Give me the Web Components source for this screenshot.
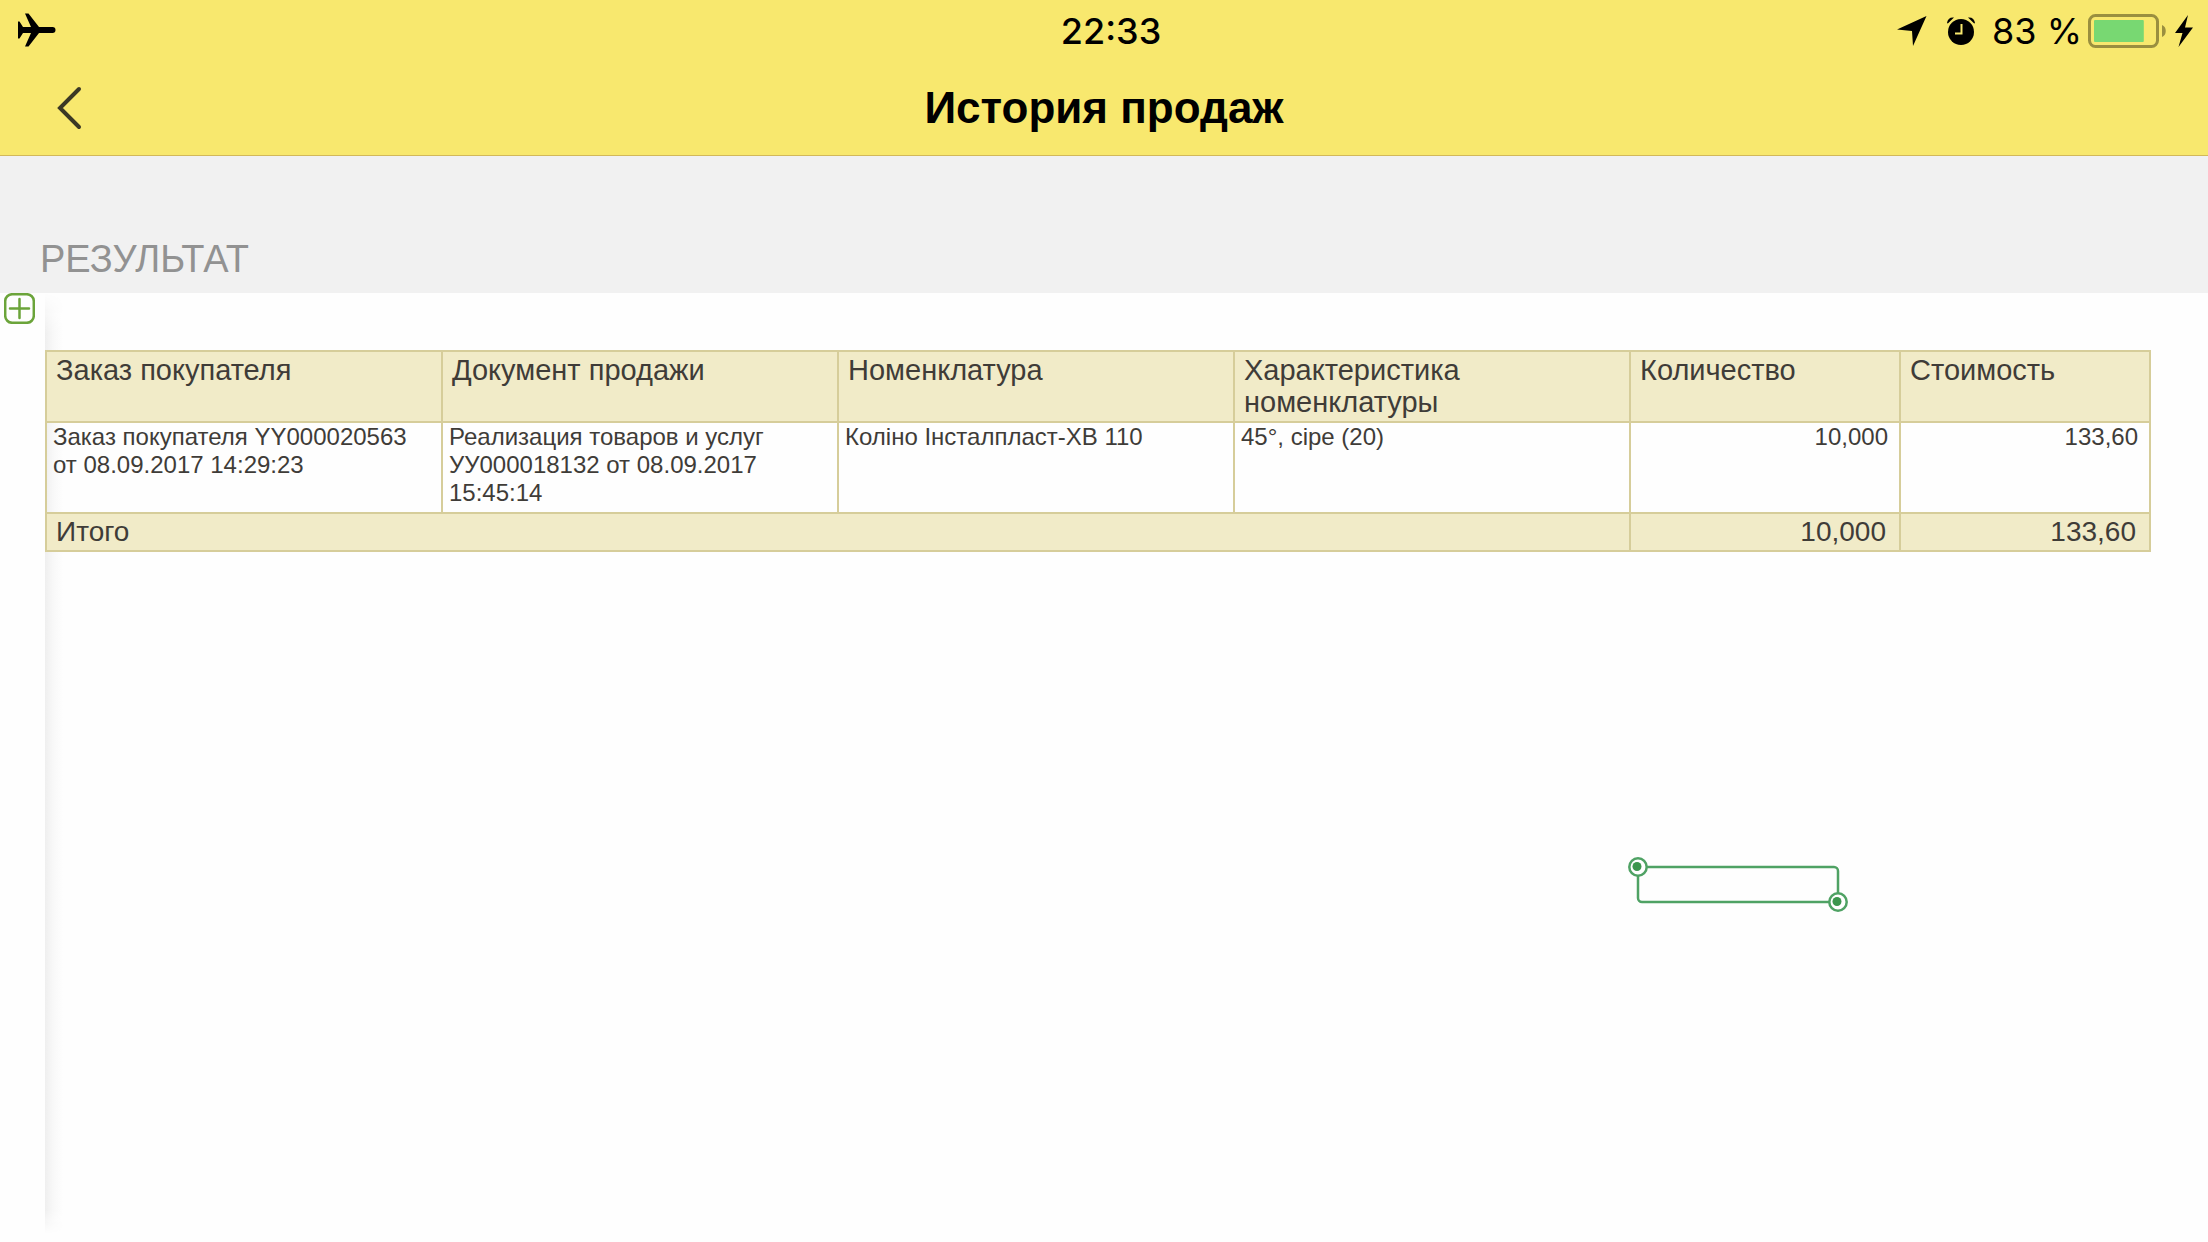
<!DOCTYPE html>
<html lang="ru">
<head>
<meta charset="utf-8">
<meta name="viewport" content="width=device-width, initial-scale=1">
<title>История продаж</title>
<style>
  body {
    margin: 0;
    min-height: 100vh;
    display: flex;
    flex-direction: column;
    background: #fefefe;
    font-family: "Liberation Sans", Arial, sans-serif;
    --bar: #f8e86e;
    --cell: #f1ebc8;
    --line: #d6cd9a;
  }
  report-sheet {
    flex: 1;
  }
</style>
</head>
<body>
  <status-bar time="22:33" battery="83"></status-bar>
  <nav-bar>История продаж</nav-bar>
  <section-title>Результат</section-title>
  <report-sheet>
    <sales-table></sales-table>
    <cell-selection slot="overlay"></cell-selection>
  </report-sheet>

<script>
class StatusBar extends HTMLElement {
  constructor() {
    super();
    this.attachShadow({ mode: 'open' });
  }

  connectedCallback() {
    const battery = Number(this.getAttribute('battery'));
    this.shadowRoot.innerHTML = `
      <style>
        :host {
          display: grid;
          grid-template-columns: 1fr auto 1fr;
          align-items: center;
          height: 62px;
          padding-left: 14px;
          background: var(--bar);
          color: #000;
          font-family: Inter, sans-serif;
          font-size: 36px;
          line-height: 62px;
        }

        svg {
          display: block;
          flex: none;
        }

        .time {
          font-weight: 500;
        }

        .right {
          display: flex;
          justify-content: flex-end;
          align-items: center;
          padding-right: 14px;
        }

        .alarm {
          margin: 0 17px 0 20px;
        }

        .battery {
          margin: 0 6px;
        }
      </style>
      <svg width="44" height="36" viewBox="0 0 44 36" aria-label="Авиарежим">
        <path d="M4 8.500h1.500l3.500 5.500h8L11 .5h3.500L25 14h13.500a3 3 0 0 1 0 6H25L14.500 33.500H11L17 20H9l-3.500 5.500H4z"/>
      </svg>
      <span class="time">${this.getAttribute('time')}</span>
      <div class="right">
        <svg width="30" height="30" viewBox="0 0 30 30" aria-label="Геопозиция">
          <path d="M29.500 0 16 30 15 15 0 13.500z"/>
        </svg>
        <svg class="alarm" width="28" height="28" viewBox="0 0 28 28" aria-label="Будильник">
          <circle cx="14" cy="15" r="13"/>
          <path d="M0 6C.5 2 3 0 7 .5L.8 6.500zM28 6C27.500 2 25 0 21 .5l6.200 6z"/>
          <path d="M14.500 7v9.500H8" fill="none" stroke="#f8e86e" stroke-width="2"/>
        </svg>
        <span>${battery} %</span>
        <svg class="battery" width="80" height="34" viewBox="0 0 80 34" aria-label="Батарея">
          <rect x="1.500" y="1.500" width="68" height="31" rx="6" fill="none" stroke="#9a8f3f" stroke-width="3"/>
          <rect x="6" y="6" width="${battery * 0.6}" height="22" rx="1" fill="#78d872"/>
          <path d="M74 11c5 1.500 5 10.500 0 12z" fill="#9a8f3f"/>
        </svg>
        <svg width="20" height="32" viewBox="0 0 20 32" aria-label="Зарядка">
          <path d="M14 0 1 18h7.500L4.500 32 19 12.500h-8z"/>
        </svg>
      </div>
    `;
  }
}

class NavBar extends HTMLElement {
  constructor() {
    super();
    this.attachShadow({ mode: 'open' });
    this.shadowRoot.innerHTML = `
      <style>
        :host {
          display: grid;
          grid-template-columns: 96px 1fr 96px;
          align-items: center;
          height: 93px;
          background: var(--bar);
          border-bottom: 1px solid #d2b85a;
        }

        button {
          display: flex;
          align-items: center;
          height: 92px;
          padding: 0 0 2px 56px;
          border: 0;
          background: none;
          cursor: pointer;
        }

        h1 {
          margin: 0;
          padding-bottom: 2px;
          text-align: center;
          font-size: 44px;
          line-height: 60px;
          color: #000;
        }
      </style>
      <button aria-label="Назад">
        <svg width="28" height="44" viewBox="0 0 28 44" aria-hidden="true">
          <path d="M23 3 4 22l19 19" fill="none" stroke="#3b3825" stroke-width="4" stroke-linecap="round"/>
        </svg>
      </button>
      <h1><slot></slot></h1>
    `;
  }
}

class SectionTitle extends HTMLElement {
  constructor() {
    super();
    this.attachShadow({ mode: 'open' });
    this.shadowRoot.innerHTML = `
      <style>
        :host {
          display: block;
          padding: 83px 40px 14px;
          background: #f1f1f1;
        }

        h2 {
          margin: 0;
          font-size: 38px;
          font-weight: normal;
          line-height: 40px;
          text-transform: uppercase;
          color: #929292;
        }
      </style>
      <h2><slot></slot></h2>
    `;
  }
}

class ReportSheet extends HTMLElement {
  constructor() {
    super();
    this.attachShadow({ mode: 'open' });
    this.shadowRoot.innerHTML = `
      <style>
        :host {
          display: grid;
          grid-template-columns: 45px 1fr;
        }

        button {
          display: block;
          margin: 0 0 0 4px;
          padding: 0;
          border: 0;
          background: none;
          cursor: pointer;
        }

        svg {
          display: block;
        }

        .canvas {
          position: relative;
          padding: 57px 57px 0 0;
        }

        /* shadow cast by the grouping gutter */
        .canvas::before {
          content: "";
          position: absolute;
          z-index: -1;
          inset: 0 auto 8px 0;
          width: 18px;
          background: linear-gradient(to right, #efefef, #f8f8f8 45%, #fefefe);
          -webkit-mask-image: linear-gradient(transparent, #000 40px calc(100% - 24px), transparent);
          mask-image: linear-gradient(transparent, #000 40px calc(100% - 24px), transparent);
        }
      </style>
      <div class="gutter">
        <button aria-label="Развернуть">
          <svg width="31" height="31" viewBox="0 0 31 31" fill="none" stroke="#6ba43a" stroke-width="2.500" aria-hidden="true">
            <rect x="1.200" y="1.200" width="28.600" height="28.600" rx="7"/>
            <path d="M6 15.500h19M15.500 6v19" stroke-linecap="round"/>
          </svg>
        </button>
      </div>
      <div class="canvas">
        <slot></slot>
        <slot name="overlay"></slot>
      </div>
    `;
  }
}

class SalesTable extends HTMLElement {
  constructor() {
    super();
    this.attachShadow({ mode: 'open' });
    this.shadowRoot.innerHTML = `
      <style>
        :host {
          display: block;
        }

        table {
          width: 100%;
          table-layout: fixed;
          border-collapse: collapse;
          color: #3f3c38;
        }

        .quantity {
          width: 270px;
        }

        .cost {
          width: 250px;
        }

        th, td {
          border: 2px solid var(--line);
          text-align: left;
          vertical-align: top;
          font-weight: normal;
        }

        thead th, tfoot th, tfoot td {
          padding: 2px 13px 3px 9px;
          background: var(--cell);
          font-size: 29px;
          line-height: 32px;
        }

        tfoot th, tfoot td {
          padding-bottom: 2px;
          font-size: 28px;
        }

        tbody td {
          padding: 0 11px 5px 6px;
          font-size: 24px;
          line-height: 28px;
        }

        td.num {
          text-align: right;
        }
      </style>
      <table>
        <colgroup>
          <col span="4">
          <col class="quantity">
          <col class="cost">
        </colgroup>
        <thead>
          <tr>
            <th scope="col">Заказ покупателя</th>
            <th scope="col">Документ продажи</th>
            <th scope="col">Номенклатура</th>
            <th scope="col">Характеристика номенклатуры</th>
            <th scope="col">Количество</th>
            <th scope="col">Стоимость</th>
          </tr>
        </thead>
        <tbody>
          <tr>
            <td>Заказ покупателя YY000020563 от 08.09.2017 14:29:23</td>
            <td>Реализация товаров и услуг УУ000018132 от 08.09.2017 15:45:14</td>
            <td>Коліно Інсталпласт-ХВ 110</td>
            <td>45°, сіре (20)</td>
            <td class="num">10,000</td>
            <td class="num">133,60</td>
          </tr>
        </tbody>
        <tfoot>
          <tr>
            <th scope="row" colspan="4">Итого</th>
            <td class="num">10,000</td>
            <td class="num">133,60</td>
          </tr>
        </tfoot>
      </table>
    `;
  }
}

class CellSelection extends HTMLElement {
  constructor() {
    super();
    this.attachShadow({ mode: 'open' });
    this.shadowRoot.innerHTML = `
      <style>
        :host {
          position: absolute;
          left: 1583px;
          top: 564px;
        }

        svg {
          display: block;
        }
      </style>
      <svg width="220" height="56" viewBox="0 0 220 56" fill="none" stroke="#4fa264" stroke-width="2.500" aria-hidden="true">
        <rect x="10" y="10" width="200" height="35" rx="4"/>
        <circle cx="10" cy="10" r="8.700" fill="#fff"/>
        <circle cx="210" cy="45" r="8.700" fill="#fff"/>
        <g fill="#3c964e" stroke="none">
          <circle cx="9" cy="9.500" r="4.500"/>
          <circle cx="209" cy="44.500" r="4.500"/>
        </g>
      </svg>
    `;
  }
}

customElements.define('status-bar', StatusBar);
customElements.define('nav-bar', NavBar);
customElements.define('section-title', SectionTitle);
customElements.define('report-sheet', ReportSheet);
customElements.define('sales-table', SalesTable);
customElements.define('cell-selection', CellSelection);
</script>
</body>
</html>
